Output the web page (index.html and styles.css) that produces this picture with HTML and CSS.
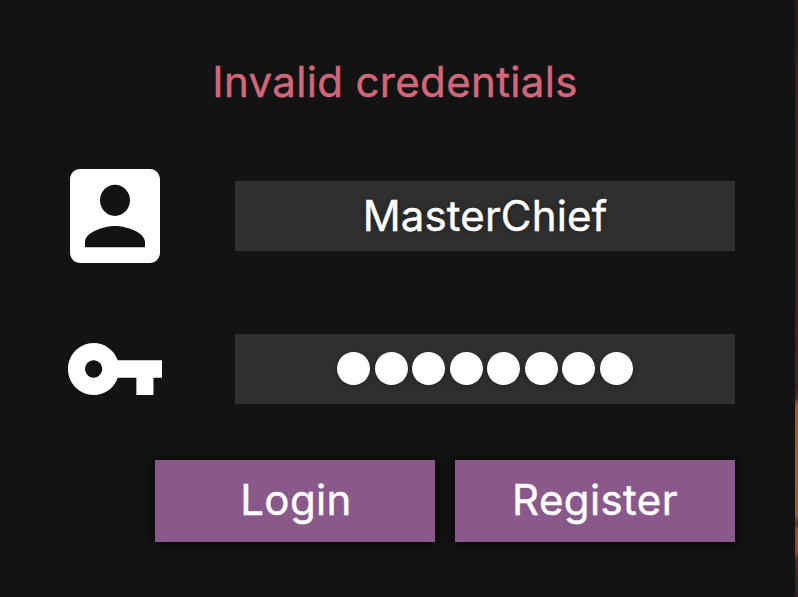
FILE: index.html
```
<!DOCTYPE html>
<html lang="en">
<head>
<meta charset="utf-8">
<title>Login</title>
<link rel="stylesheet" href="styles.css">
</head>
<body>
<main class="panel">
  <p class="error"><span>Invalid credentials</span></p>
  <div class="row">
    <div class="icon-cell">
      <svg class="account" viewBox="3 3 18 18" preserveAspectRatio="none"><path d="M3 5v14c0 1.1.89 2 2 2h14c1.1 0 2-.9 2-2V5c0-1.1-.9-2-2-2H5c-1.11 0-2 .9-2 2zm12 4c0 1.66-1.34 3-3 3s-3-1.34-3-3 1.34-3 3-3 3 1.34 3 3zm-9 8c0-2 4-3.1 6-3.1s6 1.1 6 3.1v1H6v-1z"/></svg>
    </div>
    <div class="field username"><span>MasterChief</span></div>
  </div>
  <div class="row password-row">
    <div class="icon-cell">
      <svg class="key" viewBox="1 6 22 12" preserveAspectRatio="none"><path d="M12.65 10C11.83 7.67 9.61 6 7 6c-3.31 0-6 2.69-6 6s2.69 6 6 6c2.61 0 4.83-1.67 5.65-4H17v4h4v-4h2v-4H12.65zM7 14c-1.1 0-2-.9-2-2s.9-2 2-2 2 .9 2 2-.9 2-2 2z"/></svg>
    </div>
    <div class="field dots"><i></i><i></i><i></i><i></i><i></i><i></i><i></i><i></i></div>
  </div>
  <div class="actions">
    <button class="login"><span>Login</span></button>
    <button class="register"><span>Register</span></button>
  </div>
</main>
<div class="backdrop"></div>
</body>
</html>
```
FILE: styles.css
```
* { box-sizing: border-box; }
body {
  margin: 0;
  display: flex;
  height: 597px;
  overflow: hidden;
  background: #131313;
  color: #fff;
  font: 42px/50px Inter, sans-serif;
  -webkit-text-stroke: 0.45px currentColor;
}
.panel { width: 795px; height: 597px; padding: 57px 60px 0 60px; background: #131313; }
.error {
  margin: 0 0 60px;
  width: 670px;
  height: 50px;
  text-align: center;
  color: #d4667a;
  letter-spacing: 0.35px;
}
.row { display: flex; align-items: center; height: 98px; }
.password-row { margin-top: 55px; }
.icon-cell { width: 110px; margin-right: 65px; display: flex; justify-content: center; }
svg { display: block; fill: #fff; }
.account { width: 90px; height: 94px; }
.key { width: 94px; height: 52px; }
.field {
  width: 500px;
  height: 70px;
  padding-top: 10px;
  background: #303030;
  text-align: center;
  letter-spacing: 0.15px;
  text-shadow: 0 0 10px rgba(0, 0, 0, .4);
}
.dots { display: flex; justify-content: center; align-items: center; gap: 4.5px; padding: 0 0 1px; }
.dots i { width: 33px; height: 33px; border-radius: 50%; background: #fff; box-shadow: 0 2px 10px rgba(0, 0, 0, .25); }
.actions { display: flex; justify-content: flex-end; gap: 20px; margin-top: 42px; }
button {
  width: 280px;
  height: 82px;
  border: 0;
  padding: 0 0 2px;
  background: #89598b;
  color: #fff;
  font: inherit;
  letter-spacing: 0.4px;
  -webkit-text-stroke: 0.45px currentColor;
  box-shadow: 0 0 10px 1px rgba(0, 0, 0, .8);
}
.login { padding-left: 2px; }
.backdrop {
  width: 3px;
  height: 597px;
  background: linear-gradient(#2c1b19 0, #42201e 130px, #3b2020 385px, #50252a 398px, #985a26 404px, #98602a 515px, #5c2c2b 523px, #925226 530px, #8b4f27 551px, #4c2527 560px, #2d2023 597px);
}
```
